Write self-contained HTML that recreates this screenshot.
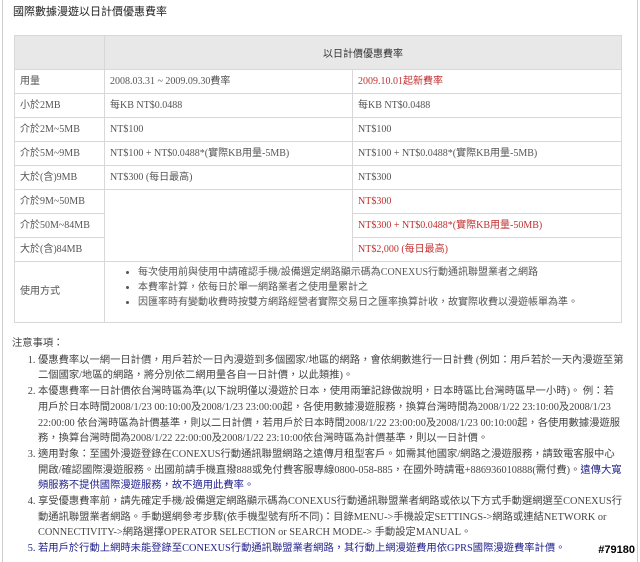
<!DOCTYPE html>
<html><head><meta charset="utf-8"><style>
body{margin:0;width:640px;height:562px;background:#fff;font-family:"Liberation Serif","Noto Sans CJK TC",serif;color:#555;font-size:10px;overflow:hidden;position:relative}
.frame{position:absolute;left:2px;top:0;width:634px;height:562px;border-left:1px solid #ccc;border-right:1px solid #ccc}
.title{position:absolute;left:13px;top:3px;font-size:11px;color:#222;font-family:"Liberation Sans","Noto Sans CJK TC",sans-serif}
table{position:absolute;left:14px;top:35px;width:608px;border-collapse:collapse}
td{border:1px solid #d8d8d8;padding:0 0 0 5px;height:23px;line-height:14px;vertical-align:middle;white-space:nowrap}
th{background:#e8e8e8;border:1px solid #d8d8d8;height:31px;font-weight:normal;color:#333;font-family:"Liberation Sans","Noto Sans CJK TC",sans-serif}
.r{color:#c03030}
ul{margin:0;padding-left:28px;list-style:disc}
ul li{line-height:15px}
.notes{position:absolute;left:12px;top:336px;width:612px;line-height:15.7px;color:#444;font-size:10.3px}
ol{margin:1px 0 0;padding-left:26px}
.b{color:#23238e}
.tag{position:absolute;right:5px;bottom:6px;font-family:"Liberation Sans",sans-serif;font-weight:bold;font-size:11px;color:#000}
</style></head><body>
<div class="frame"></div>
<div class="title">國際數據漫遊以日計價優惠費率</div>
<table>
<tr><th style="width:84px"></th><th colspan="2">以日計價優惠費率</th></tr>
<tr><td style="width:84px">用量</td><td style="width:242px">2008.03.31 ~ 2009.09.30費率</td><td class="r">2009.10.01起新費率</td></tr>
<tr><td>小於2MB</td><td>每KB NT$0.0488</td><td>每KB NT$0.0488</td></tr>
<tr><td>介於2M~5MB</td><td>NT$100</td><td>NT$100</td></tr>
<tr><td>介於5M~9MB</td><td>NT$100 + NT$0.0488*(實際KB用量-5MB)</td><td>NT$100 + NT$0.0488*(實際KB用量-5MB)</td></tr>
<tr><td>大於(含)9MB</td><td>NT$300 (每日最高)</td><td>NT$300</td></tr>
<tr><td>介於9M~50MB</td><td rowspan="3"></td><td class="r">NT$300</td></tr>
<tr><td>介於50M~84MB</td><td class="r">NT$300 + NT$0.0488*(實際KB用量-50MB)</td></tr>
<tr><td>大於(含)84MB</td><td class="r">NT$2,000 (每日最高)</td></tr>
<tr><td style="height:60px">使用方式</td><td colspan="2" style="vertical-align:top;padding-top:3px"><ul>
<li>每次使用前與使用中請確認手機/設備選定網路顯示碼為CONEXUS行動通訊聯盟業者之網路</li>
<li>本費率計算，依每日於單一網路業者之使用量累計之</li>
<li>因匯率時有變動收費時按雙方網路經營者實際交易日之匯率換算計收，故實際收費以漫遊帳單為準。</li></ul></td></tr>
</table>
<div class="notes">注意事項：
<ol>
<li>優惠費率以一網一日計價，用戶若於一日內漫遊到多個國家/地區的網路，會依網數進行一日計費 (例如：用戶若於一天內漫遊至第二個國家/地區的網路，將分別依二網用量各自一日計價，以此類推)。</li>
<li>本優惠費率一日計價依台灣時區為準(以下說明僅以漫遊於日本，使用兩筆記錄做說明，日本時區比台灣時區早一小時)。 例：若用戶於日本時間2008/1/23 00:10:00及2008/1/23 23:00:00起，各使用數據漫遊服務，換算台灣時間為2008/1/22 23:10:00及2008/1/23 22:00:00 依台灣時區為計價基準，則以二日計價，若用戶於日本時間2008/1/22 23:00:00及2008/1/23 00:10:00起，各使用數據漫遊服務，換算台灣時間為2008/1/22 22:00:00及2008/1/22 23:10:00依台灣時區為計價基準，則以一日計價。</li>
<li>適用對象：至國外漫遊登錄在CONEXUS行動通訊聯盟網路之遠傳月租型客戶。如需其他國家/網路之漫遊服務，請致電客服中心開啟/確認國際漫遊服務。出國前請手機直撥888或免付費客服專線0800-058-885，在國外時請電+886936010888(需付費)。<span class="b">遠傳大寬頻服務不提供國際漫遊服務，故不適用此費率。</span></li>
<li>享受優惠費率前，請先確定手機/設備選定網路顯示碼為CONEXUS行動通訊聯盟業者網路或依以下方式手動選網選至CONEXUS行動通訊聯盟業者網路。手動選網參考步驟(依手機型號有所不同)：目錄MENU-&gt;手機設定SETTINGS-&gt;網路或連結NETWORK or CONNECTIVITY-&gt;網路選擇OPERATOR SELECTION or SEARCH MODE-&gt; 手動設定MANUAL。</li>
<li class="b">若用戶於行動上網時未能登錄至CONEXUS行動通訊聯盟業者網路，其行動上網漫遊費用依GPRS國際漫遊費率計價。</li>
</ol></div>
<div class="tag">#79180</div>
</body></html>
